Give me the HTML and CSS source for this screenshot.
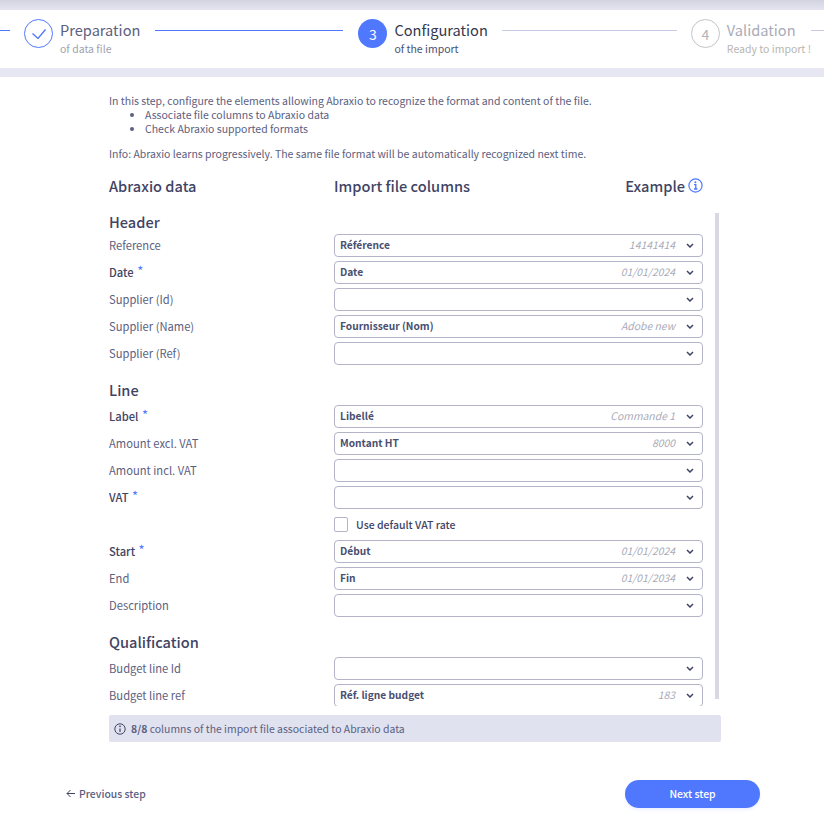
FILE: index.html
```html
<!DOCTYPE html>
<html lang="en">
<head>
    <meta charset="UTF-8">
    <meta name="viewport" content="width=device-width, initial-scale=1.0">
    <title>Import - Abraxio</title>
    <link rel="stylesheet" href="styles.css">
</head>
<body>
    <div class="top-shadow"></div>

    <div class="stepper">
        <div class="step-line line-start done"></div>
        <div class="step">
            <div class="step-circle circle-done">
                <svg width="14" height="10" viewBox="0 0 14 10" fill="none"><path d="M0.5 4.5L6 9.5L13.5 0.5" stroke="#4f78ff" stroke-width="1.3"/></svg>
            </div>
            <div class="step-text">
                <div class="step-title">Preparation</div>
                <div class="step-sub">of data file</div>
            </div>
        </div>
        <div class="step-line line-first done"></div>
        <div class="step">
            <div class="step-circle circle-active">3</div>
            <div class="step-text step-current">
                <div class="step-title">Configuration</div>
                <div class="step-sub">of the import</div>
            </div>
        </div>
        <div class="step-line line-second"></div>
        <div class="step">
            <div class="step-circle circle-next">4</div>
            <div class="step-text step-muted">
                <div class="step-title">Validation</div>
                <div class="step-sub">Ready to import !</div>
            </div>
        </div>
        <div class="step-line line-end"></div>
    </div>

    <div class="main">
        <p class="intro">In this step, configure the elements allowing Abraxio to recognize the format and content of the file.</p>
        <ul class="intro-list">
            <li>Associate file columns to Abraxio data</li>
            <li>Check Abraxio supported formats</li>
        </ul>
        <p class="intro-info">Info: Abraxio learns progressively. The same file format will be automatically recognized next time.</p>

        <div class="col-heads">
            <div class="col-data">Abraxio data</div>
            <div class="col-file">Import file columns</div>
            <div class="col-example">
                Example
                <svg width="15" height="15" viewBox="0 0 15 15" fill="none"><circle cx="7.5" cy="7.5" r="6.6" stroke="#4f78ff" stroke-width="1.2"/><path d="M6 6.6H7.8V11M6 11H9.4" stroke="#4f78ff" stroke-width="1.3"/><circle cx="7.4" cy="4.2" r="1" fill="#4f78ff"/></svg>
            </div>
        </div>

        <div class="mapping">
            <div class="scroll-thumb"></div>

            <h2 class="group-title first">Header</h2>
            <div class="row">
                <label>Reference</label>
                <div class="select"><b>Référence</b><i>14141414</i><svg class="chev" width="8" height="5" viewBox="0 0 8 5" fill="none"><path d="M1 1L4 4L7 1" stroke="#3f4464" stroke-width="1.5"/></svg></div>
            </div>
            <div class="row">
                <label class="req">Date <span>*</span></label>
                <div class="select"><b>Date</b><i>01/01/2024</i><svg class="chev" width="8" height="5" viewBox="0 0 8 5" fill="none"><path d="M1 1L4 4L7 1" stroke="#3f4464" stroke-width="1.5"/></svg></div>
            </div>
            <div class="row">
                <label>Supplier (Id)</label>
                <div class="select"><svg class="chev" width="8" height="5" viewBox="0 0 8 5" fill="none"><path d="M1 1L4 4L7 1" stroke="#3f4464" stroke-width="1.5"/></svg></div>
            </div>
            <div class="row">
                <label>Supplier (Name)</label>
                <div class="select"><b>Fournisseur (Nom)</b><i>Adobe new</i><svg class="chev" width="8" height="5" viewBox="0 0 8 5" fill="none"><path d="M1 1L4 4L7 1" stroke="#3f4464" stroke-width="1.5"/></svg></div>
            </div>
            <div class="row">
                <label>Supplier (Ref)</label>
                <div class="select"><svg class="chev" width="8" height="5" viewBox="0 0 8 5" fill="none"><path d="M1 1L4 4L7 1" stroke="#3f4464" stroke-width="1.5"/></svg></div>
            </div>

            <h2 class="group-title">Line</h2>
            <div class="row">
                <label class="req">Label <span>*</span></label>
                <div class="select"><b>Libellé</b><i>Commande 1</i><svg class="chev" width="8" height="5" viewBox="0 0 8 5" fill="none"><path d="M1 1L4 4L7 1" stroke="#3f4464" stroke-width="1.5"/></svg></div>
            </div>
            <div class="row">
                <label>Amount excl. VAT</label>
                <div class="select"><b>Montant HT</b><i>8000</i><svg class="chev" width="8" height="5" viewBox="0 0 8 5" fill="none"><path d="M1 1L4 4L7 1" stroke="#3f4464" stroke-width="1.5"/></svg></div>
            </div>
            <div class="row">
                <label>Amount incl. VAT</label>
                <div class="select"><svg class="chev" width="8" height="5" viewBox="0 0 8 5" fill="none"><path d="M1 1L4 4L7 1" stroke="#3f4464" stroke-width="1.5"/></svg></div>
            </div>
            <div class="row">
                <label class="req">VAT <span>*</span></label>
                <div class="select"><svg class="chev" width="8" height="5" viewBox="0 0 8 5" fill="none"><path d="M1 1L4 4L7 1" stroke="#3f4464" stroke-width="1.5"/></svg></div>
            </div>
            <div class="row row-check">
                <div class="checkbox"></div>
                <span>Use default VAT rate</span>
            </div>
            <div class="row">
                <label class="req">Start <span>*</span></label>
                <div class="select"><b>Début</b><i>01/01/2024</i><svg class="chev" width="8" height="5" viewBox="0 0 8 5" fill="none"><path d="M1 1L4 4L7 1" stroke="#3f4464" stroke-width="1.5"/></svg></div>
            </div>
            <div class="row">
                <label>End</label>
                <div class="select"><b>Fin</b><i>01/01/2034</i><svg class="chev" width="8" height="5" viewBox="0 0 8 5" fill="none"><path d="M1 1L4 4L7 1" stroke="#3f4464" stroke-width="1.5"/></svg></div>
            </div>
            <div class="row">
                <label>Description</label>
                <div class="select"><svg class="chev" width="8" height="5" viewBox="0 0 8 5" fill="none"><path d="M1 1L4 4L7 1" stroke="#3f4464" stroke-width="1.5"/></svg></div>
            </div>

            <h2 class="group-title">Qualification</h2>
            <div class="row">
                <label>Budget line Id</label>
                <div class="select"><svg class="chev" width="8" height="5" viewBox="0 0 8 5" fill="none"><path d="M1 1L4 4L7 1" stroke="#3f4464" stroke-width="1.5"/></svg></div>
            </div>
            <div class="row">
                <label>Budget line ref</label>
                <div class="select"><b>Réf. ligne budget</b><i>183</i><svg class="chev" width="8" height="5" viewBox="0 0 8 5" fill="none"><path d="M1 1L4 4L7 1" stroke="#3f4464" stroke-width="1.5"/></svg></div>
            </div>
        </div>

        <div class="info-bar">
            <svg width="12" height="12" viewBox="0 0 12 12" fill="none"><circle cx="6" cy="6" r="5.2" stroke="#3f4464"/><path d="M6 5.4V9" stroke="#3f4464" stroke-width="1.2"/><circle cx="6" cy="3.4" r="0.8" fill="#3f4464"/></svg>
            <span><b>8/8</b> columns of the import file associated to Abraxio data</span>
        </div>
    </div>

    <div class="footer">
        <a class="btn-prev" href="#">
            <svg width="9" height="9" viewBox="0 0 9 9" fill="none"><path d="M4.5 1L1 4.5L4.5 8M1 4.5H9" stroke="#3f4464"/></svg>
            Previous step
        </a>
        <button class="btn-next" type="button">Next step</button>
    </div>
</body>
</html>
```

FILE: styles.css
```css
:root {
    --primary: #4f78ff;
    --dark: #3f4464;
    --gray: #5c6080;
    --muted: #a9abb8;
    --border: #b4b4c8;
    --band: #e6e7f3;
}

* {
    margin: 0;
    padding: 0;
    box-sizing: border-box;
}

body {
    width: 824px;
    height: 824px;
    overflow: hidden;
    background: white;
    color: var(--dark);
    font-family: "Noto Sans CJK JP", "Noto Sans", sans-serif;
    font-size: 10.5px;
}

.top-shadow {
    height: 10px;
    background: linear-gradient(#d2d3e0, #e4e5f0);
}

/* stepper */
.stepper {
    height: 67px;
    padding-top: 9px;
    border-bottom: 9px solid var(--band);
    display: flex;
    align-items: flex-start;
    overflow: hidden;
}

.step {
    display: flex;
    flex-shrink: 0;
}

.step-circle {
    width: 29px;
    height: 29px;
    border-radius: 50%;
    display: flex;
    align-items: center;
    justify-content: center;
    font-size: 14px;
    flex-shrink: 0;
}

.circle-done {
    border: 1px solid var(--primary);
}

.circle-active {
    background: var(--primary);
    color: white;
}

.circle-next {
    border: 1px solid #c4c4c8;
    color: #b4b4b8;
}

.step-text {
    margin-left: 7px;
}

.step-title {
    font-size: 14.6px;
    line-height: 21px;
    color: #5c6080;
}

.step-sub {
    font-size: 10.5px;
    line-height: 17px;
    color: #a0a2b0;
}

.step-current .step-title {
    color: #33384f;
}

.step-current .step-sub {
    color: #4c5070;
}

.step-muted .step-title {
    color: #a9abb8;
}

.step-muted .step-sub {
    color: #b8b6b0;
}

.step-line {
    height: 1px;
    margin-top: 11px;
    background: #c6cae6;
    flex-shrink: 0;
}

.step-line.done {
    background: var(--primary);
}

.line-start {
    width: 10px;
    margin-right: 14px;
}

.line-first {
    width: 188px;
    margin-left: 15px;
    margin-right: 15px;
}

.line-second {
    width: 175px;
    margin-left: 14px;
    margin-right: 14px;
}

.line-end {
    width: 20px;
}

/* main block */
.main {
    padding: 17px 103px 0 109px;
}

.intro,
.intro-info,
.intro-list {
    font-size: 10.5px;
    line-height: 14px;
    color: var(--gray);
}

.intro-list {
    padding-left: 36px;
}

.intro-info {
    margin-top: 11px;
}

.col-heads {
    display: flex;
    align-items: center;
    margin-top: 13px;
    height: 22px;
    font-size: 14.6px;
    font-weight: 500;
    padding-right: 18px;
}

.col-data {
    width: 225px;
}

.col-example {
    margin-left: auto;
    display: flex;
    align-items: center;
    gap: 3px;
}

/* scrolled list, the last row is cut by the bottom edge */
.mapping {
    position: relative;
    height: 501px;
    margin-top: 9px;
    padding-top: 7px;
    padding-right: 18px;
    overflow: hidden;
}

.scroll-thumb {
    position: absolute;
    top: 8px;
    right: 2px;
    width: 4px;
    height: 486px;
    background: #d8d9e0;
}

.group-title {
    font-size: 14.6px;
    font-weight: 500;
    line-height: 20px;
    height: 20px;
    margin-top: 15px;
    margin-bottom: 5px;
    color: var(--dark);
}

.group-title.first {
    margin-top: 0;
    margin-bottom: 2px;
}

.row {
    display: flex;
    align-items: center;
    height: 23px;
    margin-bottom: 4px;
}

.row label {
    width: 225px;
    flex-shrink: 0;
    color: var(--gray);
    font-size: 11.2px;
    margin-top: -2px;
}

.row label.req {
    font-weight: 500;
    color: var(--dark);
}

.row label span {
    color: var(--primary);
    font-size: 13px;
    line-height: 0;
    font-weight: 400;
    margin-left: 1px;
    vertical-align: 1px;
}

.select {
    flex: 1;
    height: 23px;
    border: 1px solid var(--border);
    border-radius: 4px;
    display: flex;
    align-items: center;
    padding: 0 8px 2px 5px;
    font-size: 10.2px;
}

.select b {
    font-weight: 700;
    color: #4a4f70;
}

.select i {
    margin-left: auto;
    color: var(--muted);
    font-size: 10.4px;
}

.chev {
    margin-left: 11px;
    margin-top: 2px;
}

.select > .chev:first-child {
    margin-left: auto;
}

.row-check {
    padding-left: 225px;
    height: 15px;
    margin-top: 8px;
    margin-bottom: 8px;
    font-size: 10.5px;
    font-weight: 500;
}

.checkbox {
    width: 14px;
    height: 15px;
    border: 1px solid var(--border);
    border-radius: 2px;
    margin-right: 8px;
}

.info-bar {
    height: 27px;
    margin-top: 9px;
    background: #e0e2f0;
    border-radius: 2px;
    display: flex;
    align-items: center;
    gap: 5px;
    padding-left: 5px;
    font-size: 10.45px;
    color: var(--gray);
}

.info-bar b {
    font-weight: 700;
}

/* footer buttons */
.footer {
    display: flex;
    justify-content: space-between;
    align-items: center;
    padding: 0 64px 0 66px;
    margin-top: 38px;
}

.btn-prev {
    display: flex;
    align-items: center;
    gap: 4px;
    padding-bottom: 2px;
    color: var(--gray);
    font-size: 10.4px;
    font-weight: 500;
    text-decoration: none;
}

.btn-next {
    width: 135px;
    height: 28px;
    padding-bottom: 1px;
    border: none;
    border-radius: 14px;
    background: var(--primary);
    color: white;
    font-family: inherit;
    font-size: 10.4px;
    font-weight: 500;
    box-shadow: 0 2px 3px rgba(79, 120, 255, 0.1);
}
```
